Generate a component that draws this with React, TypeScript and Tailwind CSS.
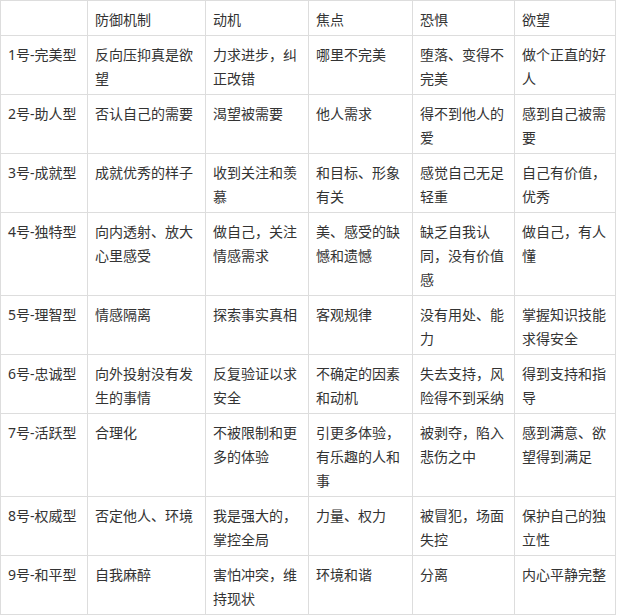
import React from 'react';

// each cell is a list of lines, broken where the screenshot breaks them
const header = ['', '防御机制', '动机', '焦点', '恐惧', '欲望'];

const rows: string[][][] = [
  [['1号-完美型'], ['反向压抑真是欲', '望'], ['力求进步，纠', '正改错'], ['哪里不完美'], ['堕落、变得不', '完美'], ['做个正直的好', '人']],
  [['2号-助人型'], ['否认自己的需要'], ['渴望被需要'], ['他人需求'], ['得不到他人的', '爱'], ['感到自己被需', '要']],
  [['3号-成就型'], ['成就优秀的样子'], ['收到关注和羡', '慕'], ['和目标、形象', '有关'], ['感觉自己无足', '轻重'], ['自己有价值，', '优秀']],
  [['4号-独特型'], ['向内透射、放大', '心里感受'], ['做自己，关注', '情感需求'], ['美、感受的缺', '憾和遗憾'], ['缺乏自我认', '同，没有价值', '感'], ['做自己，有人', '懂']],
  [['5号-理智型'], ['情感隔离'], ['探索事实真相'], ['客观规律'], ['没有用处、能', '力'], ['掌握知识技能', '求得安全']],
  [['6号-忠诚型'], ['向外投射没有发', '生的事情'], ['反复验证以求', '安全'], ['不确定的因素', '和动机'], ['失去支持，风', '险得不到采纳'], ['得到支持和指', '导']],
  [['7号-活跃型'], ['合理化'], ['不被限制和更', '多的体验'], ['引更多体验，', '有乐趣的人和', '事'], ['被剥夺，陷入', '悲伤之中'], ['感到满意、欲', '望得到满足']],
  [['8号-权威型'], ['否定他人、环境'], ['我是强大的，', '掌控全局'], ['力量、权力'], ['被冒犯，场面', '失控'], ['保护自己的独', '立性']],
  [['9号-和平型'], ['自我麻醉'], ['害怕冲突，维', '持现状'], ['环境和谐'], ['分离'], ['内心平静完整']],
];

const Cell: React.FC<{ lines: string[] }> = ({ lines }) => (
  <div className="bg-white pl-[7px] pr-1 pt-[7px] pb-[3px] text-[14px] leading-6 text-[#333333] whitespace-nowrap">
    {lines.length === 0 || lines[0] === '' ? <span>&nbsp;</span> : lines.map((l, i) => <div key={i}>{l}</div>)}
  </div>
);

const App: React.FC = () => {
  return (
    <div className="h-[616px] w-[618px] bg-white" style={{ fontFamily: '"Noto Sans", "Noto Sans CJK SC", sans-serif' }}>
      <div className="grid w-[616px] grid-cols-[86px_117px_102px_103px_101px_100px] gap-px border border-[#dddddd] bg-[#dddddd]">
        {header.map((h, i) => (
          <Cell key={'h' + i} lines={[h]} />
        ))}
        {rows.map((row, r) =>
          row.map((cell, c) => <Cell key={r + '-' + c} lines={cell} />)
        )}
      </div>
    </div>
  );
};

export default App;
